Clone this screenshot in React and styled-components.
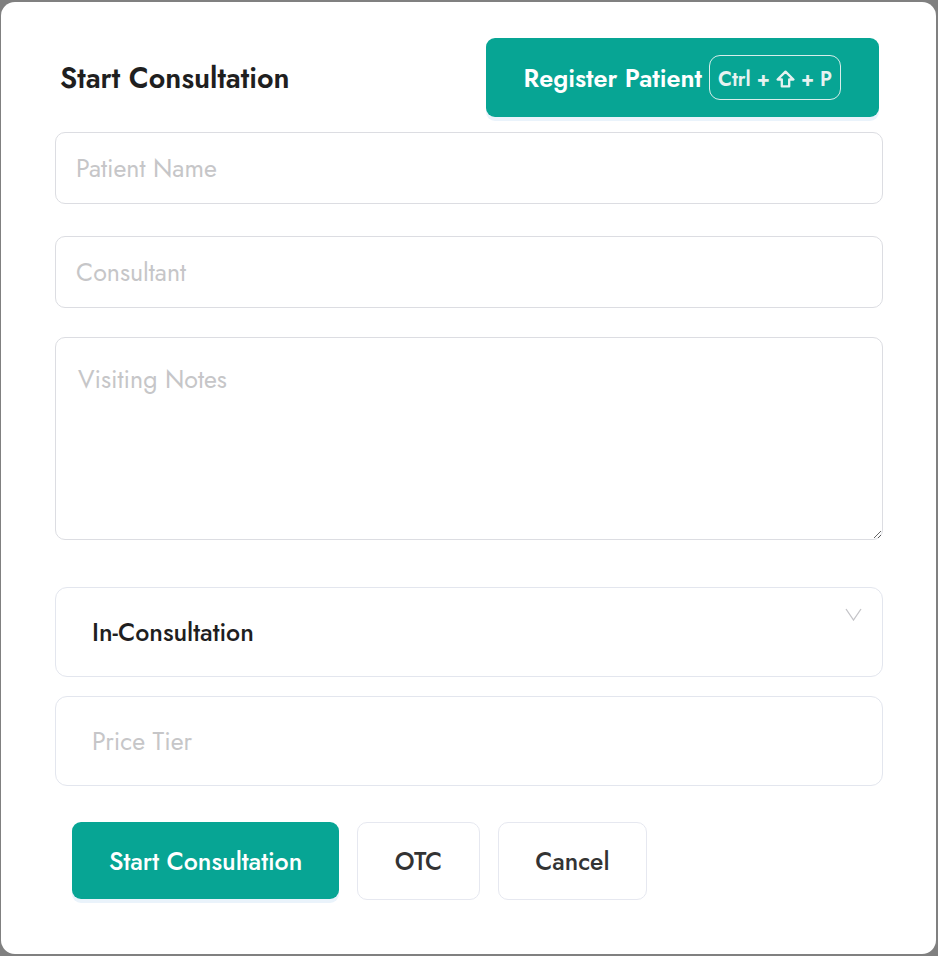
import React from "react";
import styled, { createGlobalStyle } from "styled-components";

const Global = createGlobalStyle`
  html, body { margin: 0; padding: 0; background: #808080; }
  body { font-family: "Jost", Lato, "Noto Sans", sans-serif; }
  * { box-sizing: border-box; }
`;

const Backdrop = styled.div`
  width: 938px;
  height: 956px;
  background: #808080;
  padding: 2px 2px 2px 1px;
  display: flex;
`;

const Modal = styled.div`
  flex: 1;
  background: #ffffff;
  border-radius: 14px;
  padding: 36px 53px 0 54px;
  display: flex;
  flex-direction: column;
`;

const Header = styled.div`
  display: flex;
  align-items: center;
  justify-content: space-between;
  padding: 0 4px 0 5px;
  margin-bottom: 15px;
`;

const Title = styled.h2`
  margin: 0;
  font-size: 28.7px;
  font-weight: 600;
  color: #1f1f1f;
`;

const PrimaryButton = styled.button`
  display: flex;
  align-items: center;
  justify-content: center;
  gap: 7px;
  height: ${(p) => p.$h}px;
  padding: 0 ${(p) => p.$px}px;
  background: #07a594;
  color: #ffffff;
  border: none;
  border-radius: 9px;
  font-family: inherit;
  font-size: ${(p) => p.$fs}px;
  font-weight: ${(p) => p.$fw};
  box-shadow: 0 4px 0 #eaf3fb;
  cursor: pointer;
`;

const Kbd = styled.span`
  display: inline-flex;
  align-items: center;
  gap: 6px;
  height: 45px;
  padding: 4px 8px 0;
  border: 1px solid #d7eeeb;
  border-radius: 11px;
  color: #e7f2f1;
  font-size: 20px;
  font-weight: 600;
`;

const ShiftSvg = styled.svg`
  margin-top: -1px;
`;

const TextInput = styled.input`
  width: 100%;
  height: 72px;
  margin-bottom: ${(p) => p.$mb}px;
  border: 1px solid #dcdde2;
  border-radius: 10px;
  padding: 0 20px;
  font-family: inherit;
  font-size: 25px;
  color: #222;
  outline: none;
  &::placeholder { color: #c6c6c8; }
`;

const TextArea = styled.textarea`
  width: 100%;
  height: 203px;
  margin-bottom: 47px;
  border: 1px solid #dcdde2;
  border-radius: 10px;
  padding: 23px 22px;
  font-family: inherit;
  font-size: 25px;
  color: #222;
  outline: none;
  resize: vertical;
  display: block;
  &::placeholder { color: #c6c6c8; }
`;

const SelectBox = styled.div`
  width: 100%;
  height: 90px;
  margin-bottom: 19px;
  border: 1px solid #e3e6ee;
  border-radius: 12px;
  padding: 0 20px 0 36px;
  display: flex;
  align-items: center;
  justify-content: space-between;
`;

const SelectValue = styled.span`
  font-size: 25px;
  font-weight: 500;
  color: #1f1f1f;
`;

const Chevron = styled.svg`
  align-self: flex-start;
  margin-top: 20px;
`;

const TierInput = styled(TextInput)`
  height: 90px;
  border-color: #e3e6ee;
  border-radius: 12px;
  padding: 0 36px;
`;

const Actions = styled.div`
  display: flex;
  align-items: flex-start;
  gap: 18px;
  padding-left: 17px;
`;

const OutlineButton = styled.button`
  height: 78px;
  padding: 0 36.5px;
  background: #fff;
  border: 1px solid #e6e8f0;
  border-radius: 10px;
  font-family: inherit;
  font-size: 24.7px;
  font-weight: 500;
  color: #333;
  cursor: pointer;
`;

const ShiftIcon = () => (
  <ShiftSvg width="19" height="18" viewBox="0 0 18 17" fill="none">
    <path d="M9 1.5 L16.5 9 H12.5 V15.5 H5.5 V9 H1.5 Z" stroke="#e7f2f1" strokeWidth="2.2" strokeLinejoin="round" />
  </ShiftSvg>
);

export default function App() {
  return (
    <>
      <Global />
      <Backdrop>
        <Modal>
          <Header>
            <Title>Start Consultation</Title>
            <PrimaryButton $h={79} $px={38} $fs={25.2} $fw={600}>
              Register Patient
              <Kbd>
                Ctrl + <ShiftIcon /> + P
              </Kbd>
            </PrimaryButton>
          </Header>
          <TextInput $mb={32} placeholder="Patient Name" />
          <TextInput $mb={29} placeholder="Consultant" />
          <TextArea placeholder="Visiting Notes" />
          <SelectBox>
            <SelectValue>In-Consultation</SelectValue>
            <Chevron width="17" height="13" viewBox="0 0 17 13" fill="none">
              <path d="M1 1 L8.5 12 L16 1" stroke="#c4c4c8" strokeWidth="1.3" />
            </Chevron>
          </SelectBox>
          <TierInput $mb={36} placeholder="Price Tier" />
          <Actions>
            <PrimaryButton $h={77} $px={37} $fs={25} $fw={500}>
              Start Consultation
            </PrimaryButton>
            <OutlineButton>OTC</OutlineButton>
            <OutlineButton>Cancel</OutlineButton>
          </Actions>
        </Modal>
      </Backdrop>
    </>
  );
}
